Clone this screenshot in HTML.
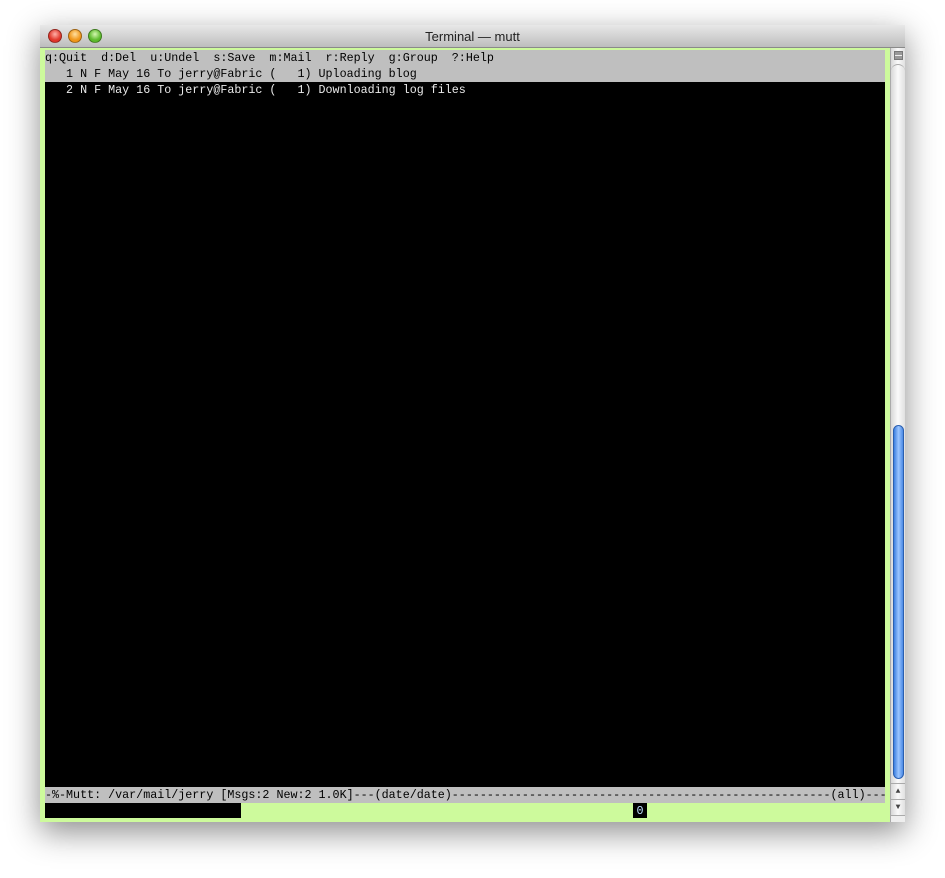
<!DOCTYPE html>
<html><head><meta charset="utf-8"><style>
*{margin:0;padding:0;box-sizing:border-box}
body{width:945px;height:878px;background:#fff;position:relative;overflow:hidden;font-family:"Liberation Mono",monospace}
.win{position:absolute;left:40px;top:25px;width:865px;height:797px;box-shadow:0 10px 30px rgba(0,0,0,.45);background:#cdfa9c}
.title{position:absolute;left:0;top:0;width:865px;height:23px;background:linear-gradient(#e8e8e8,#bdbdbd);border-bottom:1px solid #8a8a8a;font-family:"Liberation Sans","DejaVu Sans",sans-serif;font-size:13px;text-align:center;line-height:23px;color:#222}
.btn{position:absolute;top:4px;width:14px;height:14px;border-radius:50%;border:1px solid rgba(0,0,0,.35)}
.term{position:absolute;left:5px;top:25px;width:840px;height:768px;background:#000;overflow:hidden}
.l{position:absolute;left:0;width:840px;height:16px;font-size:11.7px;line-height:16px;white-space:pre;color:#eaeaea;overflow:hidden}
.g{background:#bfbfbf;color:#000}
.sb{position:absolute;left:850px;top:23px;width:15px;height:774px;background:linear-gradient(90deg,#d8d8d8,#fafafa 50%,#e0e0e0);border-left:1px solid #aaa}
.thumb{position:absolute;left:2px;top:377px;width:11px;height:354px;border-radius:6px;background:linear-gradient(90deg,#3c7fe0,#9cc6ff 50%,#4b8ae6);border:1px solid #2a5fb0}
</style></head><body>
<div class="win">
<div class="title">Terminal — mutt
<div class="btn" style="left:8px;background:radial-gradient(circle at 50% 35%,#ffb0a8,#e0362a 60%)"></div>
<div class="btn" style="left:28px;background:radial-gradient(circle at 50% 35%,#ffe0a0,#f0961a 60%)"></div>
<div class="btn" style="left:48px;background:radial-gradient(circle at 50% 35%,#d4f7b0,#5cba2c 60%)"></div>
</div>
<div class="term">
<div class="l g" style="top:0">q:Quit  d:Del  u:Undel  s:Save  m:Mail  r:Reply  g:Group  ?:Help</div>
<div class="l g" style="top:16px">   1 N F May 16 To jerry@Fabric (   1) Uploading blog</div>
<div class="l" style="top:32px">   2 N F May 16 To jerry@Fabric (   1) Downloading log files</div>
<div class="l g" style="top:737px">-%-Mutt: /var/mail/jerry [Msgs:2 New:2 1.0K]---(date/date)------------------------------------------------------(all)---</div>
<div class="l" style="top:753px;background:#cdfa9c;height:15px"><span style="position:absolute;left:0;top:0;width:196px;height:16px;background:#000"></span><span style="position:absolute;left:588px;top:0;width:14px;height:16px;background:#000;color:#bfe0ff;text-align:center">0</span></div>
</div>
<div class="sb">
<div style="position:absolute;left:3px;top:3px;width:9px;height:9px;border:1px solid #777;background:linear-gradient(#999 0 40%,#eee 40% 60%,#999 60%)"></div>
<div style="position:absolute;left:0;top:16px;width:14px;height:12px;border-top:1px solid #aaa;border-radius:7px 7px 0 0"></div>
<div class="thumb"></div>
<div style="position:absolute;left:0;top:735px;width:14px;height:16px;border-top:1px solid #aaa;font-size:8px;text-align:center;line-height:16px;color:#444">▲</div>
<div style="position:absolute;left:0;top:751px;width:14px;height:16px;border-top:1px solid #aaa;font-size:8px;text-align:center;line-height:16px;color:#444">▼</div>
<div style="position:absolute;left:0;top:767px;width:14px;height:7px;border-top:1px solid #aaa;background:#eee"></div>
</div>
</div>
</body></html>
